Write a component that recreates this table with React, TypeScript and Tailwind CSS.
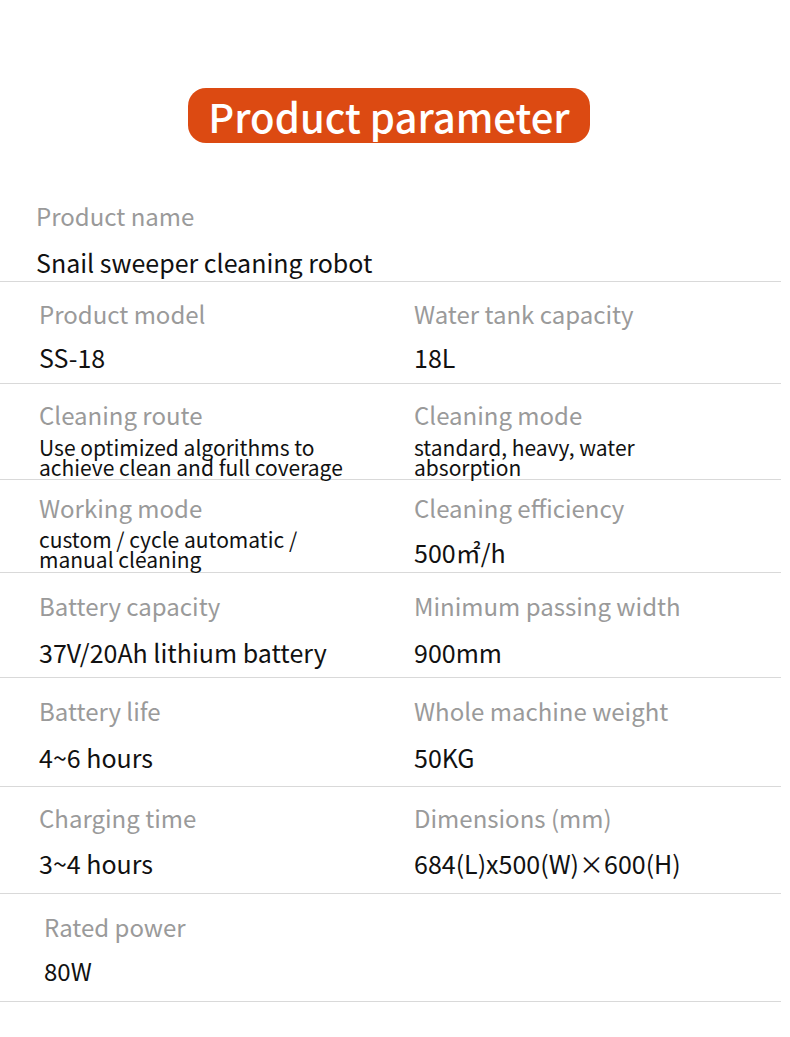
type Cell = {
  label: string;
  value: string[];
  gap: number;
};

type Row = {
  height: number;
  pt: number;
  left: Cell;
  right?: Cell;
};

const rows: Row[] = [
  {
    height: 102,
    pt: 17,
    left: { label: "Product model", value: ["SS-18"], gap: 13 },
    right: { label: "Water tank capacity", value: ["18L"], gap: 13 },
  },
  {
    height: 96,
    pt: 16,
    left: {
      label: "Cleaning route",
      value: ["Use optimized algorithms to", "achieve clean and full coverage"],
      gap: 7,
    },
    right: {
      label: "Cleaning mode",
      value: ["standard, heavy, water", "absorption"],
      gap: 7,
    },
  },
  {
    height: 93,
    pt: 13,
    left: {
      label: "Working mode",
      value: ["custom / cycle automatic /", "manual cleaning"],
      gap: 6,
    },
    right: { label: "Cleaning efficiency", value: ["500㎡/h"], gap: 14 },
  },
  {
    height: 105,
    pt: 18,
    left: {
      label: "Battery capacity",
      value: ["37V/20Ah lithium battery"],
      gap: 16,
    },
    right: { label: "Minimum passing width", value: ["900mm"], gap: 16 },
  },
  {
    height: 109,
    pt: 18,
    left: { label: "Battery life", value: ["4~6 hours"], gap: 16 },
    right: { label: "Whole machine weight", value: ["50KG"], gap: 16 },
  },
  {
    height: 107,
    pt: 16,
    left: { label: "Charging time", value: ["3~4 hours"], gap: 15 },
    right: {
      label: "Dimensions (mm)",
      value: ["684(L)x500(W)×600(H)"],
      gap: 15,
    },
  },
];

function ParamCell({ cell }: { cell: Cell }) {
  const multi = cell.value.length > 1;
  return (
    <div className="flex flex-col">
      <p className="text-[24px] leading-[30px] text-[#9a9a9a]">{cell.label}</p>
      <div
        className={
          multi
            ? "text-[21px] leading-[20px] text-[#111]"
            : "text-[25px] leading-[30px] text-[#111]"
        }
        style={{ marginTop: cell.gap }}
      >
        {cell.value.map((line) => (
          <p key={line}>{line}</p>
        ))}
      </div>
    </div>
  );
}

export default function App() {
  return (
    <div
      className="h-[1037px] w-[790px] overflow-hidden bg-white"
      style={{ fontFamily: '"Noto Sans CJK SC", "Noto Sans", sans-serif' }}
    >
      <div className="flex justify-center pt-[88px] pr-[12px]">
        <div className="flex h-[55px] w-[402px] items-center justify-center rounded-[18px] bg-[#dc4a12]">
          <span className="text-[40px] font-medium leading-none text-white">
            Product parameter
          </span>
        </div>
      </div>

      <div className="mr-[9px]">
        <div className="h-[139px] border-b border-[#d9d9d9] pl-[36px] pt-[58px]">
          <p className="text-[24px] leading-[30px] text-[#9a9a9a]">Product name</p>
          <p className="mt-[16px] text-[25px] leading-[30px] text-[#111]">
            Snail sweeper cleaning robot
          </p>
        </div>

        {rows.map((row) => (
          <div
            key={row.left.label}
            className="flex border-b border-[#d9d9d9]"
            style={{ height: row.height, paddingTop: row.pt }}
          >
            <div className="w-[414px] pl-[39px]">
              <ParamCell cell={row.left} />
            </div>
            <div className="flex-1">
              {row.right ? <ParamCell cell={row.right} /> : null}
            </div>
          </div>
        ))}

        <div className="h-[108px] border-b border-[#d9d9d9] pl-[44px] pt-[18px]">
          <p className="text-[24px] leading-[30px] text-[#9a9a9a]">Rated power</p>
          <p className="mt-[14px] text-[24px] leading-[30px] text-[#111]">80W</p>
        </div>
      </div>
    </div>
  );
}
